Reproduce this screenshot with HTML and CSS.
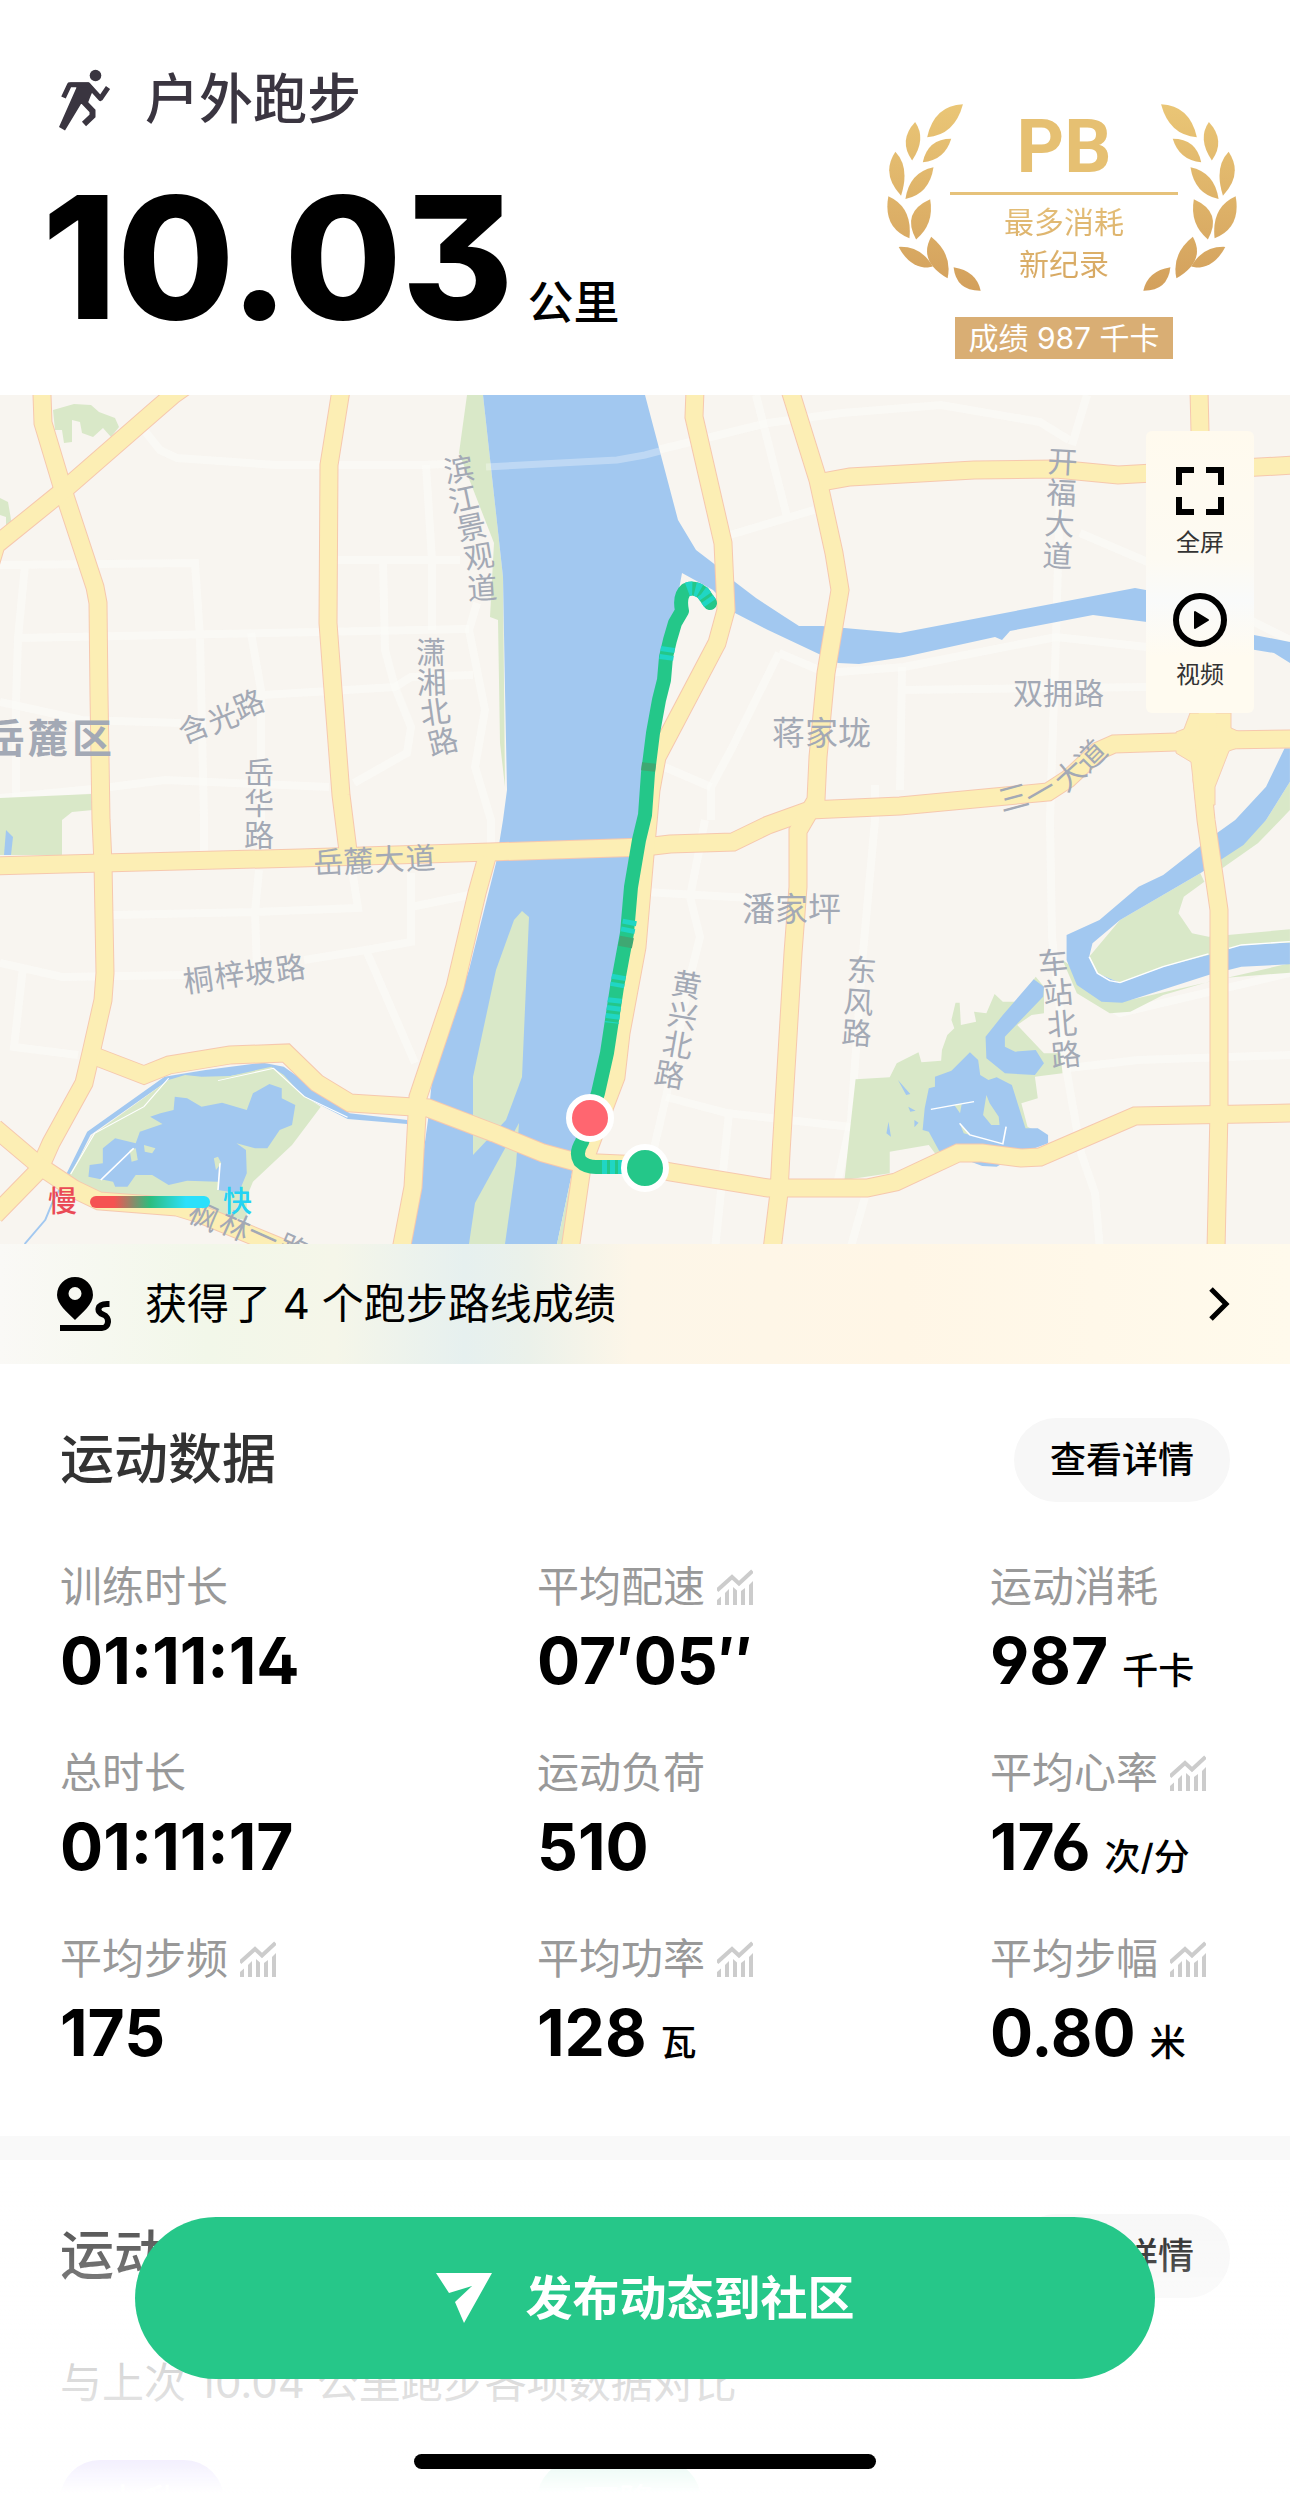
FILE: index.html
```html
<!DOCTYPE html>
<html lang="zh-CN">
<head>
    <meta charset="UTF-8">
    <meta name="viewport" content="width=device-width, initial-scale=1.0">
    <title>户外跑步</title>
    <link rel="stylesheet" href="styles.css">
</head>
<body>
    <!-- shared icon -->
    <svg class="sprite" aria-hidden="true">
        <symbol id="trend" viewBox="0 0 36 36">
            <path d="M0 21.5L15 8L22 14.5L35.5 2" fill="none" stroke="currentColor" stroke-width="4"/>
            <path d="M0 31l4-3.500V36H0zM8 24l4-4v16H8zM16 18l4 3.500V36h-4zM24 22l4-3v17h-4zM32 16l4-4v24h-4z" fill="currentColor"/>
        </symbol>
    </svg>

    <main class="page">
        <header class="summary">
            <div class="summary-main">
                <h1 class="sport">
                    <svg class="sport-icon" viewBox="0 0 52 62" aria-hidden="true">
                        <circle cx="36.500" cy="6.500" r="5.800" fill="currentColor"/>
                        <path d="M11 13.500H30L35 19.500L32 26L28.500 35H22L6 61.500L0 58L17.500 18.500z" fill="currentColor"/>
                        <path d="M4.500 28.500L10.500 15.800H29L41.500 29.500L49 18.500" fill="none" stroke="currentColor" stroke-width="5" stroke-linejoin="round"/>
                        <path d="M23 31L33.500 42V47L25 55" fill="none" stroke="currentColor" stroke-width="6"/>
                    </svg>
                    户外跑步
                </h1>
                <p class="distance"><span class="distance-num">10.03</span><span class="distance-unit">公里</span></p>
            </div>

            <div class="badge">
                <svg class="wreath" viewBox="110 65 1052 570" aria-hidden="true">
                    <defs>
                        <linearGradient id="gold" gradientUnits="userSpaceOnUse" x1="0" y1="70" x2="0" y2="630">
                            <stop offset="0" stop-color="#eac676"/>
                            <stop offset="1" stop-color="#d3a05c"/>
                        </linearGradient>
                        <g id="branch">
                            <path d="M340 72Q255 75 233 170Q315 165 340 72Z"/>
                            <path d="M197 125Q146 180 188 240Q232 175 197 125Z"/>
                            <path d="M305 175Q235 175 220 245Q285 240 305 175Z"/>
                            <path d="M138 214Q94 280 155 345Q182 260 138 214Z"/>
                            <path d="M252 260Q180 275 168 355Q240 340 252 260Z"/>
                            <path d="M117 347Q100 440 180 472Q190 380 117 347Z"/>
                            <path d="M242 356Q155 395 200 476Q255 430 242 356Z"/>
                            <path d="M148 498Q180 560 235 560L250 557Q215 495 148 498Z"/>
                            <path d="M245 468Q205 540 294 592Q310 520 245 468Z"/>
                            <path d="M312 559Q320 630 393 629Q380 570 312 559Z"/>
                        </g>
                    </defs>
                    <g fill="url(#gold)">
                        <use href="#branch"/>
                        <use href="#branch" transform="translate(1272 0) scale(-1 1)"/>
                    </g>
                </svg>
                <strong class="badge-pb">PB</strong>
                <p class="badge-text">最多消耗<br>新纪录</p>
                <span class="badge-score">成绩 987 千卡</span>
            </div>
        </header>

        <section class="map">
            <svg class="map-canvas" viewBox="0 0 1290 849" role="img" aria-label="跑步轨迹">
                <defs>
                    <!-- main roads, stroked twice: casing and surface -->
                    <g id="roads">
                        <path d="M42 -10V0L43 28L64 98L95 192L98 208L99 300L101 425L103 468L105 578L103 605L91 658L84 688L51 748L39 775L-5 820"/>
                        <path d="M190 -12L173 0L158 13L64 95L-4 150L-10 170"/>
                        <path d="M-5 733L41 772L74 794L99 806L177 812L200 819L290 856"/>
                        <path d="M341 -5L329 70L328 228L333 295L341 400L348 456"/>
                        <path d="M-5 471L103 468L300 463L490 457L645 452L670 449L733 447L768 430L810 415L900 411L1048 397L1068 384L1098 356L1114 349L1176 347L1221 345L1295 344"/>
                        <path d="M695 -5L694 22L723 148L726 215L717 248L657 362L651 395L645 460L637 552L621 638L616 682L592 745L582 772L570 855"/>
                        <path d="M790 -5L818 85L834 158L840 195L826 278L818 362L816 405L798 436L798 492L793 558L781 758L779 798L772 855"/>
                        <path d="M822 87L850 82L974 75L1056 74L1118 80L1295 70"/>
                        <path d="M1199 -5L1202 120L1208 345L1202 385L1206 425L1219 515V715L1216 855"/>
                        <path d="M97 662L144 680L169 670L230 660L286 658L317 688L350 708L428 713L494 738L543 758L576 767L642 770L670 777L768 793L867 793L896 787L958 758H982L1021 763L1040 762L1135 721L1295 718"/>
                        <path d="M487 462L477 498L455 592L418 702L413 792L401 855"/>
                    </g>
                </defs>

                <rect width="1290" height="849" fill="#f8f5f0"/>

                <!-- small streets -->
                <g class="street">
                    <path d="M144 35L160 55L177 63L276 70H420L617 63L645 58L707 43L768 28L842 18L941 10L1040 27L1069 45M1087 0L1072 50"/>
                    <path d="M1060 95L1056 242L1050 425L1052 542L1067 678L1081 758L1095 798L1100 855"/>
                    <path d="M0 170L195 168L200 242L204 425V460M25 170L18 243L16 308V402M18 243L469 234"/>
                    <path d="M337 165H460M383 165L385 255L395 292L411 332L407 358L354 388M426 70L432 165V235"/>
                    <path d="M251 238L261 295V460M263 300L395 292L411 282L473 280M477 208L469 235L485 315L475 372L491 425V450"/>
                    <path d="M0 403L103 393L165 385L329 392M0 307L82 325L181 328"/>
                    <path d="M113 520L255 517L358 513L352 475M259 475L255 517L257 575M411 478V547L366 555L304 565M366 555L415 668M411 512L469 500"/>
                    <path d="M0 568L62 582L185 580M23 572L14 652L78 660"/>
                    <path d="M756 0L787 122M723 142L814 115M779 258L731 355L711 392V425M779 258L826 278L904 272L1056 242L1147 252"/>
                    <path d="M902 272L900 395M900 295L1147 292M1080 138L1150 168M660 370L711 392M1240 220L1290 245"/>
                    <path d="M875 390V425L863 558L851 725L838 785M705 425L690 502L700 542L690 582L666 702L650 770M645 497L785 505"/>
                    <path d="M666 702L727 718L851 732M729 718L715 855M1069 673L1138 665L1290 660M867 795L850 855M1090 600L1120 618L1290 578"/>
                </g>

                <!-- parks along the west -->
                <g fill="#d9e8c8">
                    <path d="M53 15L74 9L91 10L99 17L115 23L119 32L111 42L103 33L93 42L82 38L80 27L72 25V47L64 48L62 35L55 35z"/>
                    <path d="M0 103L8 107L12 130L6 132V122L0 120z"/>
                    <path d="M0 403L91 399L93 415L72 417L62 425V460H0z"/>
                    <path d="M467 0H483L503 182L505 392L500 348L498 225L490 222L494 148L459 58z"/>
                </g>
                <path d="M6 435L13 442L11 460H4z" fill="#a2c8f0"/>

                <!-- 湘江 and 浏阳河 -->
                <path class="water" d="M483 0H645L678 125L696 155L713 168L735 187L756 203L785 222L799 231H822L900 238L1135 193L1200 205L1254 240L1290 247V268L1274 258L1195 245L1147 227L1093 220L1010 236L1002 245L995 242L904 262L859 269L838 268L768 235L735 218L713 195L682 178L674 222L661 295L645 425L629 475L609 625L592 698L576 745L572 778L557 849H411L428 725L432 685L469 575L496 468L503 425L507 395L505 295L503 182z"/>
                <path d="M572 778L557 849H562L577 790z" fill="#d9e8c8"/>
                <path d="M522 516L529 522L522 682L506 725L473 760V682L496 575L514 525z" fill="#d9e8c8"/>
                <path d="M519 728L516 770L505 849H469L475 808z" fill="#d9e8c8"/>
                <path d="M486 72L617 65L645 60L660 56" fill="none" stroke="#fff" stroke-opacity=".3" stroke-width="7"/>

                <!-- western lake -->
                <g transform="translate(0 425) scale(.4113 .3333)">
                    <path class="water" d="M160 1065L212 935L400 770L440 762L500 750L640 728L690 740L850 880L990 900V912L845 897L740 830L665 745L530 775L410 780L220 945L170 1068z"/>
                    <path d="M168 1065L225 945L410 780L450 765L490 770L560 768L660 740L690 765L730 820L780 860L710 975L615 1085L600 1130V1200L480 1180L230 1120z" fill="#d9e8c8"/>
                    <path d="M172 1062L230 940L350 860L410 775M530 782L665 745L740 830L845 892" fill="none" stroke="#fff" stroke-width="3"/>
                    <path class="water" d="M425 830L455 835L490 860L540 848L600 870L615 820L655 792L685 805V835L718 855L710 915L680 930L650 985H620L575 970L598 990L600 1060L580 1120L530 1110V1085L455 1082L410 1095L370 1065H330L310 1100H280L275 1085L215 1070L218 1035L250 1030V985L280 955L330 970L340 935L395 912L365 890L390 880L422 870z"/>
                    <path d="M350 975L378 985L370 1000L352 995zM315 990L330 985L335 1020L320 1025zM520 1015L530 1010L538 1030L525 1050z" fill="#d9e8c8"/>
                    <path d="M245 1080L325 985M535 1030L530 1110" fill="none" stroke="#fff" stroke-width="4"/>
                    <path d="M165 1065L130 1140L110 1200L60 1272" fill="none" stroke="#a2c8f0" stroke-width="5"/>
                </g>

                <!-- eastern bends and park lake -->
                <g transform="translate(645 425) scale(.4113 .3333)">
                    <path d="M1155 300L1350 160L1360 185L1310 230L1297 280L1330 340L1370 350L1568 328V368L1260 440L1155 488L1100 460L1080 410z" fill="#d9e8c8"/>
                    <path d="M1568 -115L1510 0L1400 115V148L1490 70L1545 0L1568 -30z" fill="#d9e8c8"/>
                    <path d="M1015 420L1050 520L1130 580L1180 575L1260 525L1400 475L1568 458V430L1160 545z" fill="#d9e8c8"/>
                    <path class="water" d="M1568 -115L1510 0L1455 75L1350 160L1155 300L1088 370L1080 410L1100 460L1155 488L1260 440L1370 405L1450 375L1568 368V433L1450 440L1370 465L1160 548L1110 545L1050 495L1025 420V345L1105 300L1200 200L1260 165L1390 40L1435 0L1510 -100L1555 -215H1568z"/>
                    <path d="M1080 410L1100 460L1130 482L1155 488L1260 440L1370 402M1420 385L1450 375L1568 365" fill="none" stroke="#fff" stroke-width="4"/>
                    <path d="M485 1080L512 778L595 772L612 730L665 697L672 727L720 722L722 690L735 645L752 625L745 600L755 548H765L768 615L805 605L800 575L830 580L850 522L870 545H905L950 470L970 500V580L940 585L905 615L970 700H1010L1015 760L948 770L955 835L915 850L930 920L980 950L900 985L705 1000L690 975L595 995V1060z" fill="#d9e8c8"/>
                    <path class="water" d="M945 478L970 500L968 530L875 650V680L900 695L950 690L970 730L948 765L875 760L830 715L828 650L870 585z"/>
                    <path class="water" d="M790 697L810 720L815 765L835 780L855 772L892 795L925 925H955L980 945V970L915 1000L870 1030L855 1040L820 1038L760 1010L715 992L690 935L675 930L680 865L690 805L705 800V770L745 752z"/>
                    <path d="M830 825L838 850L860 890L862 915H842L822 885zM752 855L770 852L766 880zM765 910L790 945L775 940z" fill="#d9e8c8"/>
                    <path d="M695 868L755 855L800 845M765 910L790 945L870 972L878 920" fill="none" stroke="#fff" stroke-width="4"/>
                    <path class="water" d="M615 780L645 822L635 825zM640 860L658 872L645 875zM592 905L598 950L587 940zM655 900L665 908L655 922z"/>
                </g>

                <use href="#roads" class="road-casing"/>
                <path d="M1190 318H1231V333L1240 337V352L1229 356L1215 392V410H1196L1191 367L1176 358V337L1184 334z" fill="#fceeb4" stroke="#f6ccb2" stroke-width="1"/>
                <use href="#roads" class="road-surface"/>

                <!-- labels -->
                <g class="road-label">
                    <text x="446 451 459 466 468" y="88 118 146 175 205" rotate="-10 -12 -12 -10 -4">滨江景观道</text>
                    <text x="416 417 422 431" y="268 299 330 361" rotate="0 -2 -8 -14">潇湘北路</text>
                    <text x="184 213 239" y="349 339 325" rotate="-22">含光路</text>
                    <text x="244 244 244" y="388 419 451">岳华路</text>
                    <text x="314 344 375 406" y="479 478 476 475" rotate="-3">岳麓大道</text>
                    <text x="185 216 246 277" y="598 593 590 586" rotate="-8">桐梓坡路</text>
                    <text x="186 217 245 275" y="825 835 845 858" rotate="24">枫林一路</text>
                    <text x="1047 1046 1044 1042" y="77 108 139 171" rotate="3">开福大道</text>
                    <text x="1013 1043 1074" y="309">双拥路</text>
                    <text x="1002 1033 1066 1088" y="417 414 398 379" rotate="-15 -30 -42 -45">三一大道</text>
                    <text x="670 666 661 653" y="598 629 658 688" rotate="10">黄兴北路</text>
                    <text x="846 843 841" y="585 617 648" rotate="4">东风路</text>
                    <text x="1039 1044 1048 1052" y="580 610 641 672" rotate="-5">车站北路</text>
                </g>
                <g class="place-label">
                    <text x="772" y="350">蒋家垅</text>
                    <text x="742" y="526">潘家坪</text>
                </g>
                <text class="district-label" x="-15 28 72" y="358">岳麓区</text>

                <!-- track -->
                <g class="track">
                    <path d="M710 208L703 198Q694 191 686 195Q679 201 682 216L675 228L670 245L666 262L664 285L659 305L653 338L648 378L645 420L639 445L631 492L627 538L617 592L607 658L598 698L590 722L582 747Q575 758 580 766Q586 772 596 772H645"/>
                    <path class="track-fast" d="M710 208L703 198Q694 191 686 195M668 252L666 266M630 525L627 540M619 580L617 592M615 603L612 628M602 772H624"/>
                    <path class="track-slow" d="M649 368L648 376M627 542L625 552M596 702L594 708"/>
                </g>
                <circle cx="645" cy="773" r="21" fill="#24c789" stroke="#fff" stroke-width="6"/>
                <circle cx="590" cy="723" r="21" fill="#ff6670" stroke="#fff" stroke-width="6"/>
            </svg>

            <div class="map-tools">
                <button type="button" class="map-tool">
                    <svg width="48" height="48" viewBox="0 0 48 48" aria-hidden="true">
                        <path d="M3 18V3H18M30 3H45V18M45 30V45H30M18 45H3V30" fill="none" stroke="#000" stroke-width="6"/>
                    </svg>
                    全屏
                </button>
                <button type="button" class="map-tool">
                    <svg width="54" height="54" viewBox="0 0 54 54" aria-hidden="true">
                        <circle cx="27" cy="27" r="24" fill="none" stroke="#000" stroke-width="6"/>
                        <path d="M22 19V35L35 27z" stroke="#000" stroke-width="2" stroke-linejoin="round"/>
                    </svg>
                    视频
                </button>
            </div>

            <div class="pace-legend">
                <span class="pace-slow">慢</span>
                <span class="pace-bar"></span>
                <span class="pace-fast">快</span>
            </div>
        </section>

        <a class="routes" href="#">
            <svg class="routes-icon" viewBox="0 0 54 54" aria-hidden="true">
                <path d="M18 0a18 18 0 0 1 18 18C36 27 26 35 18 43C10 35 0 27 0 18A18 18 0 0 1 18 0zm0 10a6.500 6.500 0 1 0 0 13a6.500 6.500 0 0 0 0-13z"/>
                <path d="M52.500 27H50C40 27 39 35 46 37.500C53.500 40 52 51 45 51H3" fill="none" stroke="#000" stroke-width="6"/>
            </svg>
            <span class="routes-text">获得了 4 个跑步路线成绩</span>
            <svg class="routes-arrow" viewBox="0 0 22 36" aria-hidden="true">
                <path d="M3 3L18 18L3 33" fill="none" stroke="#000" stroke-width="5"/>
            </svg>
        </a>

        <section class="card">
            <div class="card-head">
                <h2 class="card-title">运动数据</h2>
                <button type="button" class="more">查看详情</button>
            </div>
            <dl class="stats">
                <div class="stat">
                    <dt>训练时长</dt>
                    <dd>01:11:14</dd>
                </div>
                <div class="stat">
                    <dt>平均配速<svg class="trend"><use href="#trend"/></svg></dt>
                    <dd>07′05″</dd>
                </div>
                <div class="stat">
                    <dt>运动消耗</dt>
                    <dd>987<span class="unit">千卡</span></dd>
                </div>
                <div class="stat">
                    <dt>总时长</dt>
                    <dd>01:11:17</dd>
                </div>
                <div class="stat">
                    <dt>运动负荷</dt>
                    <dd>510</dd>
                </div>
                <div class="stat">
                    <dt>平均心率<svg class="trend"><use href="#trend"/></svg></dt>
                    <dd>176<span class="unit">次/分</span></dd>
                </div>
                <div class="stat">
                    <dt>平均步频<svg class="trend"><use href="#trend"/></svg></dt>
                    <dd>175</dd>
                </div>
                <div class="stat">
                    <dt>平均功率<svg class="trend"><use href="#trend"/></svg></dt>
                    <dd>128<span class="unit">瓦</span></dd>
                </div>
                <div class="stat">
                    <dt>平均步幅<svg class="trend"><use href="#trend"/></svg></dt>
                    <dd>0.80<span class="unit">米</span></dd>
                </div>
            </dl>
        </section>

        <section class="card">
            <div class="card-head">
                <h2 class="card-title">运动对比</h2>
                <button type="button" class="more">查看详情</button>
            </div>
            <p class="compare-text">与上次 10.04 公里跑步各项数据对比</p>
            <div class="compare-chips">
                <span class="chip chip-up">上升</span>
                <span class="chip chip-down">下降</span>
                <span class="chip chip-flat">持平</span>
            </div>
        </section>
    </main>

    <div class="bottom-bar">
        <button type="button" class="publish">
            <svg width="56" height="50" viewBox="0 0 56 50" aria-hidden="true">
                <path d="M0 0H56L28 50L19 29L36 13L13 20z" fill="#fff"/>
            </svg>
            发布动态到社区
        </button>
        <div class="home-indicator"></div>
    </div>
</body>
</html>
```
FILE: styles.css
```css
:root {
    --green: #26c789;
    --text: #000;
    --muted: #999;
    --side: 60px;
}

* {
    box-sizing: border-box;
}

body {
    margin: 0;
    background: #fff;
    color: var(--text);
    font-family: Inter, "Noto Sans CJK SC", sans-serif;
}

h1, h2, p, dl, dd {
    margin: 0;
}

button {
    border: 0;
    padding: 0;
    background: none;
    color: inherit;
    font-family: inherit;
}

.sprite {
    display: none;
}

.page {
    height: 100vh;
    overflow: hidden;
}

/* header */
.summary {
    display: flex;
    justify-content: space-between;
    align-items: flex-start;
    padding: 66px 52px 36px 42px;
}

.sport {
    display: flex;
    align-items: center;
    gap: 34px;
    padding-left: 17px;
    font-size: 54px;
    line-height: 68px;
    font-weight: 500;
    color: #3a3540;
}

.sport-icon {
    width: 52px;
    height: 62px;
}

.distance {
    display: flex;
    align-items: baseline;
    gap: 14px;
    margin-top: 23px;
}

.distance-num {
    font-size: 170px;
    line-height: 200px;
    font-weight: 800;
    font-feature-settings: "cv09";
}

.distance-unit {
    font-size: 46px;
    line-height: 60px;
    font-weight: 500;
}

.badge {
    position: relative;
    display: flex;
    flex-direction: column;
    align-items: center;
    width: 352px;
    margin-top: 36px;
    padding-left: 4px;
}

.wreath {
    position: absolute;
    top: 0;
    left: 0;
    width: 100%;
}

.badge-pb {
    width: 228px;
    border-bottom: 3px solid #e6c27a;
    text-align: center;
    font-family: Roboto, sans-serif;
    font-size: 74px;
    line-height: 90px;
    color: #e6c072;
}

.badge-text {
    margin-top: 6px;
    font-size: 30px;
    line-height: 42px;
    text-align: center;
    background: linear-gradient(#e4bf78, #d6a660);
    background-clip: text;
    color: transparent;
}

.badge-score {
    margin-top: 32px;
    padding: 0 13px;
    background: #d9ae74;
    color: #fff;
    font-size: 30px;
    line-height: 42px;
}

/* map */
.map {
    position: relative;
    overflow: hidden;
}

.map-canvas {
    display: block;
    width: 100%;
}

.street {
    fill: none;
    stroke: #fcfbf9;
    stroke-width: 8px;
    stroke-opacity: .6;
}

.water {
    fill: #a2c8f0;
}

.road-casing {
    fill: none;
    stroke: #f6c8ae;
    stroke-width: 19px;
}

.road-surface {
    fill: none;
    stroke: #fceeb4;
    stroke-width: 17px;
}

.road-label {
    font-size: 30px;
    fill: #a3a9b5;
}

.place-label {
    font-size: 33px;
    fill: #a3a9b5;
}

.district-label {
    font-size: 40px;
    font-weight: 700;
    fill: #a3a9b5;
}

.track {
    fill: none;
    stroke: #24c789;
    stroke-width: 14px;
    stroke-linecap: round;
    stroke-linejoin: round;
}

.track-fast {
    stroke: #20d6c4;
    stroke-linecap: butt;
    stroke-dasharray: 5 3;
}

.track-slow {
    stroke: #3fa873;
    stroke-linecap: butt;
}

.map-tools {
    position: absolute;
    top: 36px;
    right: 36px;
    display: flex;
    flex-direction: column;
    gap: 34px;
    width: 108px;
    padding: 36px 0 22px;
    border-radius: 6px;
    background: linear-gradient(#fffaee, #fdfaf2 45%, #f9fafa 60%, #fffbf0 80%);
}

.map-tool {
    display: flex;
    flex-direction: column;
    align-items: center;
    gap: 12px;
    font-size: 24px;
    line-height: 32px;
    color: #333;
}

.pace-legend {
    position: absolute;
    left: 48px;
    bottom: 22px;
    display: flex;
    align-items: center;
    gap: 13px;
    font-size: 29px;
    line-height: 40px;
    font-weight: 500;
}

.pace-slow {
    color: #ea4a56;
}

.pace-fast {
    color: #24d3f4;
}

.pace-bar {
    width: 120px;
    height: 12px;
    border-radius: 6px;
    background: linear-gradient(90deg, #f55252 20%, #2bbd7e 50%, #2be0fb 80%);
}

/* route records */
.routes {
    display: flex;
    align-items: center;
    padding: 0 60px 0 57px;
    background: linear-gradient(90deg, #faf9f6, #f2f7e9 16%, #f5f6e9 26%, #e6f0ef 36%, #ebf1ea 41%, #fdf6e8 49%, #fff6e6 70%, #fffaec);
    color: #000;
    font-size: 42px;
    line-height: 120px;
    text-decoration: none;
}

.routes-icon {
    width: 54px;
    height: 54px;
    margin-right: 34px;
}

.routes-text {
    flex: 1;
}

.routes-arrow {
    width: 22px;
    height: 36px;
}

/* data cards */
.card {
    padding: 54px var(--side) 63px;
}

.card + .card {
    border-top: 24px solid #f9f9f9;
}

.card-head {
    display: flex;
    justify-content: space-between;
    align-items: center;
    margin-bottom: 55px;
}

.card-title {
    font-size: 54px;
    line-height: 84px;
    font-weight: 500;
    color: #333;
}

.more {
    padding: 0 36px;
    border-radius: 42px;
    background: #f7f7f7;
    font-size: 36px;
    line-height: 84px;
    font-weight: 500;
}

.stats {
    display: grid;
    grid-template-columns: 477fr 453fr 240fr;
    row-gap: 42px;
}

.stat {
    white-space: nowrap;
}

.stat dt {
    display: flex;
    align-items: center;
    gap: 12px;
    color: var(--muted);
    font-size: 42px;
    line-height: 60px;
}

.stat dd {
    display: flex;
    align-items: baseline;
    gap: 14px;
    margin-top: 4px;
    font-size: 64px;
    line-height: 80px;
    font-weight: 700;
    font-feature-settings: "cv02", "cv03", "cv04", "cv09";
}

.unit {
    font-size: 36px;
    line-height: 48px;
    font-weight: 500;
}

.trend {
    width: 36px;
    height: 36px;
    color: #ccc;
}

.compare-text {
    color: var(--muted);
    font-size: 42px;
    line-height: 60px;
}

.compare-chips {
    display: grid;
    grid-template-columns: 477fr 453fr 240fr;
    margin-top: 47px;
}

.chip {
    width: 164px;
    border-radius: 40px;
    color: #fff;
    font-size: 36px;
    line-height: 84px;
    text-align: center;
}

.chip-up {
    background: #8a6cf0;
}

.chip-down {
    background: var(--green);
}

.chip-flat {
    background: #f7f7f7;
}

/* floating bar, fades the page out behind it */
.bottom-bar {
    position: fixed;
    left: 0;
    right: 0;
    bottom: 0;
    display: flex;
    flex-direction: column;
    align-items: center;
    gap: 75px;
    padding: 48px 135px 24px;
    background: linear-gradient(rgba(255, 255, 255, 0), rgba(255, 255, 255, .9) 90%, #fff);
}

.publish {
    display: flex;
    justify-content: center;
    align-items: center;
    gap: 34px;
    width: 100%;
    border-radius: 81px;
    background: var(--green);
    color: #fff;
    font-size: 47px;
    line-height: 162px;
    font-weight: 700;
}

.home-indicator {
    width: 462px;
    height: 15px;
    border-radius: 8px;
    background: #000;
}
```
